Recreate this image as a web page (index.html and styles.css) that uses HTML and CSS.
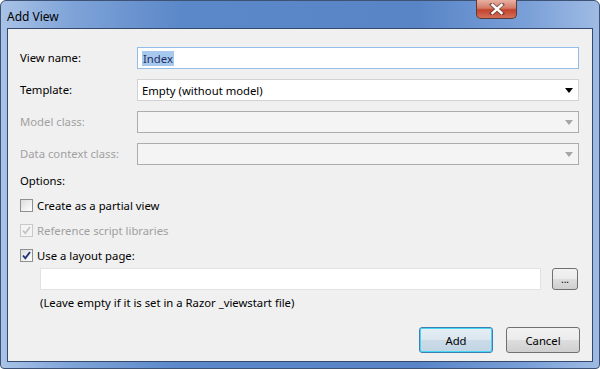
FILE: index.html
```html
<!DOCTYPE html>
<html lang="en">
<head>
    <meta charset="UTF-8">
    <title>Add View</title>
    <link rel="stylesheet" href="styles.css">
</head>
<body>

    <div class="window">
        <!-- Barra de titulo -->
        <div class="title-bar">
            <span class="title">Add View</span>
            <div class="close-btn">
                <svg width="16" height="12" viewBox="0 0 16 12">
                    <path d="M3 1.5 L13 10.5 M13 1.5 L3 10.5" stroke="#3b2a2a" stroke-width="4.2" stroke-linecap="square" opacity="0.55"/>
                    <path d="M3.5 2 L12.5 10 M12.5 2 L3.5 10" stroke="#ffffff" stroke-width="2.4" stroke-linecap="square"/>
                </svg>
            </div>
        </div>

        <div class="client">
            <div class="form-grid">
                <label class="label">View name:</label>
                <div class="field field-focus"><span class="selected">Index</span></div>

                <label class="label">Template:</label>
                <div class="field combo">
                    <span>Empty (without model)</span>
                    <span class="arrow"></span>
                </div>

                <label class="label disabled">Model class:</label>
                <div class="field combo combo-disabled"><span></span><span class="arrow"></span></div>

                <label class="label disabled">Data context class:</label>
                <div class="field combo combo-disabled"><span></span><span class="arrow"></span></div>
            </div>

            <div class="row">Options:</div>

            <div class="row">
                <span class="checkbox"></span>
                <span>Create as a partial view</span>
            </div>
            <div class="row disabled">
                <span class="checkbox checkbox-disabled">
                    <svg width="11" height="11" viewBox="0 0 11 11"><path d="M2 5.5 L4.3 8.3 L9 2" fill="none" stroke="#c4c4c4" stroke-width="1.8"/></svg>
                </span>
                <span>Reference script libraries</span>
            </div>
            <div class="row">
                <span class="checkbox">
                    <svg width="11" height="11" viewBox="0 0 11 11"><path d="M2 5.5 L4.3 8.3 L9 2" fill="none" stroke="#21367a" stroke-width="1.9"/></svg>
                </span>
                <span>Use a layout page:</span>
            </div>

            <div class="layout-row">
                <div class="field field-light"></div>
                <div class="btn btn-small">...</div>
            </div>
            <p class="hint">(Leave empty if it is set in a Razor _viewstart file)</p>

            <div class="actions">
                <div class="btn btn-default">Add</div>
                <div class="btn">Cancel</div>
            </div>
        </div>
    </div>

</body>
</html>
```

FILE: styles.css
```css
body {
    margin: 0;
    font-family: "Noto Sans", "Open Sans", sans-serif;
    font-size: 11.3px;
    color: #000;
    background-color: #ffffff;
}

.window {
    width: 600px;
    height: 369px;
    box-sizing: border-box;
    display: flex;
    flex-direction: column;
    padding: 0 6px 6px 6px;
    border: 1px solid #3d5275;
    border-radius: 6px 6px 4px 4px;
    background: linear-gradient(to right, #a9c3e7 0%, #7ea3d8 12%, #5b88c9 30%, #5985c7 70%, #7aa0d8 88%, #9fbbe4 100%);
}

.title-bar {
    height: 27px;
    display: flex;
    align-items: center;
    position: relative;
}

.title {
    font-size: 12px;
    margin-top: 3px;
    color: #000;
}

.close-btn {
    position: absolute;
    top: -1px;
    right: 76px;
    width: 41px;
    height: 19px;
    box-sizing: border-box;
    border: 1px solid #5a3b3b;
    border-top: none;
    border-radius: 0 0 5px 5px;
    background: linear-gradient(to bottom, #e8b1a3 0%, #d47a66 45%, #c2432e 55%, #d5705a 100%);
    display: flex;
    justify-content: center;
    align-items: center;
}

.client {
    flex: 1;
    background-color: #f0f0f0;
    border: 1px solid #34496b;
    padding: 18px 13px 0 12px;
}

.form-grid {
    display: grid;
    grid-template-columns: 117px 1fr;
    row-gap: 10px;
    align-items: center;
}

.label {
    line-height: 16px;
}

.disabled {
    color: #a0a0a0;
}

.field {
    height: 22px;
    box-sizing: border-box;
    border: 1px solid #ababab;
    background-color: #fff;
    display: flex;
    align-items: center;
    padding: 0 4px;
}

.field-focus {
    border-color: #93bde6;
}

.selected {
    background-color: #a7c9ee;
    color: #1d2c61;
    line-height: 15px;
    padding: 0 1px;
}

.combo {
    justify-content: space-between;
    padding-right: 5px;
    border-color: #d2d2d2;
}

.combo-disabled {
    background-color: #f4f4f4;
    border-color: #adadad;
}

.arrow {
    width: 0;
    height: 0;
    border-left: 4px solid transparent;
    border-right: 4px solid transparent;
    border-top: 5px solid #000;
}

.combo-disabled .arrow {
    border-top-color: #a6a6a6;
}

.row {
    height: 25px;
    display: flex;
    align-items: center;
}

.form-grid + .row {
    margin-top: 3px;
}

.checkbox {
    width: 13px;
    height: 13px;
    box-sizing: border-box;
    border: 1px solid #8e8f8f;
    background: linear-gradient(135deg, #dcdcdc, #ffffff);
    margin-right: 4px;
    display: flex;
    justify-content: center;
    align-items: center;
}

.checkbox-disabled {
    border-color: #c9c9c9;
    background: #f4f4f4;
}

.layout-row {
    display: flex;
    align-items: center;
    margin-left: 20px;
}

.layout-row .field {
    flex: 1;
}

.field-light {
    border-color: #e2e2e2;
}

.btn {
    width: 74px;
    height: 26px;
    box-sizing: border-box;
    border: 1px solid #707070;
    border-radius: 3px;
    background: linear-gradient(to bottom, #f2f2f2 0%, #ebebeb 50%, #dddddd 51%, #cfcfcf 100%);
    display: flex;
    justify-content: center;
    align-items: center;
}

.btn-small {
    width: 26px;
    height: 22px;
    margin-left: 11px;
    margin-right: 1px;
    font-size: 10px;
}

.btn-default {
    border-color: #3c7fb1;
    box-shadow: inset 0 0 0 1px #48d6f5;
    background: linear-gradient(to bottom, #e6eef4 0%, #dae6ef 50%, #cbdbe8 51%, #c2d4e3 100%);
}

.hint {
    margin: 5px 0 0 20px;
    line-height: 16px;
}

.actions {
    display: flex;
    justify-content: flex-end;
    gap: 13px;
    margin-top: 16px;
    margin-right: -1px;
}
```
